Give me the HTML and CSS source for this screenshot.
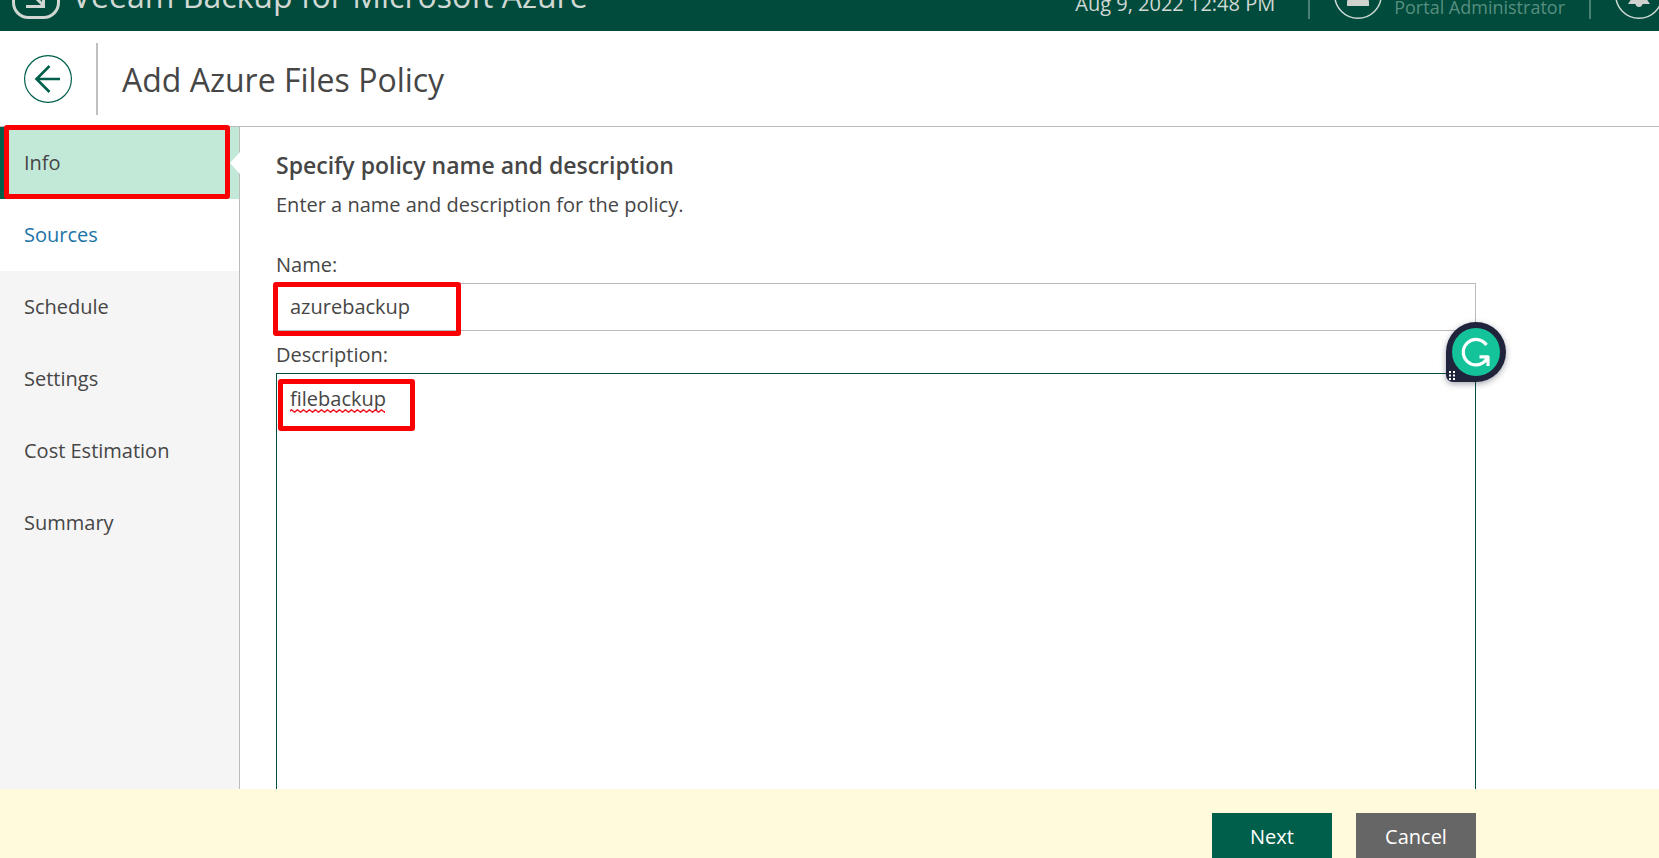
FILE: index.html
```html
<!DOCTYPE html>
<html lang="en">
<head>
<meta charset="utf-8">
<title>Add Azure Files Policy</title>
<link rel="stylesheet" href="styles.css">
</head>
<body>
<div class="app">
  <header class="topbar">
    <div class="topbar-inner">
      <svg class="logo" viewBox="0 0 48 48" aria-hidden="true">
        <rect x="1.5" y="1.5" width="45" height="45" rx="15" fill="none" stroke="#d0d6d2" stroke-width="3"/>
        <path d="M15 18L31 34M14 35.500H31.500V17" fill="none" stroke="#d0d6d2" stroke-width="3"/>
      </svg>
      <span class="product">Veeam Backup for Microsoft Azure</span>
      <span class="server-time">Aug 9, 2022 12:48 PM</span>
      <span class="rule"></span>
      <svg class="round-icon" viewBox="0 0 48 48" aria-hidden="true">
        <circle cx="24" cy="24" r="23.250" fill="none" stroke="#cfdad5" stroke-width="1.500"/>
        <circle cx="24" cy="17" r="6" fill="#d0d2d0"/>
        <path d="M13 35v-4c0-4 4-6 11-6s11 2 11 6v4z" fill="#d0d2d0"/>
      </svg>
      <span class="user-role">Portal Administrator</span>
      <span class="rule rule-after-user"></span>
      <button class="bell" type="button" aria-label="Notifications">
        <svg class="round-icon" viewBox="0 0 48 48" aria-hidden="true">
          <circle cx="24" cy="24" r="23.250" fill="none" stroke="#cfdad5" stroke-width="1.500"/>
          <path d="M24 12c-5 0-7 4-7 9v6l-4 6h22l-4-6v-6c0-5-2-9-7-9zM20.500 33h7c-.3 4-6.700 4-7 0z" fill="#d0d2d0"/>
        </svg>
      </button>
    </div>
  </header>

  <div class="titlebar">
    <button class="back" type="button" aria-label="Back">
      <svg class="round-icon" viewBox="0 0 48 48" aria-hidden="true">
        <circle cx="24" cy="24" r="23.400" fill="none" stroke="#005f4b" stroke-width="1.200"/>
        <path d="M36 24H12M25.500 11L12.500 24L25.500 37" fill="none" stroke="#005f4b" stroke-width="2.600"/>
      </svg>
    </button>
    <h1 class="title">Add Azure Files Policy</h1>
  </div>

  <div class="body">
    <nav class="steps">
      <a class="step current" href="#info">Info<span class="mark mark-step"></span></a>
      <a class="step next-step" href="#sources">Sources</a>
      <a class="step" href="#schedule">Schedule</a>
      <a class="step" href="#settings">Settings</a>
      <a class="step" href="#cost">Cost Estimation</a>
      <a class="step" href="#summary">Summary</a>
    </nav>

    <main class="content">
      <form class="form" id="policy">
        <h2 class="heading">Specify policy name and description</h2>
        <p class="lead">Enter a name and description for the policy.</p>
        <label class="label" for="name">Name:</label>
        <div class="field">
          <input class="input" id="name" type="text" value="azurebackup" spellcheck="false">
          <span class="mark mark-name"></span>
        </div>
        <label class="label" for="description">Description:</label>
        <div class="field field-grow">
          <textarea class="textarea" id="description" spellcheck="false">filebackup</textarea>
          <svg class="squiggle" viewBox="0 0 95 4" aria-hidden="true">
            <defs><pattern id="wave" width="6" height="4" patternUnits="userSpaceOnUse"><path d="M-1.500 3.200L1.500 .8L4.500 3.200L7.500 .8" fill="none" stroke="#f0141e" stroke-width="1.400"/></pattern></defs>
            <rect width="95" height="4" fill="url(#wave)"/>
          </svg>
          <span class="mark mark-description"></span>
          <svg class="assistant" viewBox="0 0 60 60" aria-hidden="true">
            <path d="M30 0a30 30 0 0 1 0 60H7a7 7 0 0 1-7-7V30A30 30 0 0 1 30 0z" fill="#1f243c"/>
            <circle cx="30" cy="30" r="24" fill="#15c39a"/>
            <path d="M40.500 23A12.700 12.700 0 1 0 40 38L42 35.500M33.500 34.800H42V44" fill="none" stroke="#fff" stroke-width="3.200" stroke-linejoin="round"/>
            <path d="M3 49h2v2H3zM7 49h2v2H7zM3 52.500h2v2H3zM7 52.500h2v2H7zM3 56h2v2H3zM7 56h2v2H7z" fill="#fff"/>
          </svg>
        </div>
      </form>
    </main>
  </div>

  <footer class="footer">
    <div class="actions">
      <button class="button primary" type="submit" form="policy">Next</button>
      <button class="button" type="button">Cancel</button>
    </div>
  </footer>
</div>
</body>
</html>
```
FILE: styles.css
```css
* { box-sizing: border-box; }

body {
  margin: 0;
  font-family: "Open Sans", "Noto Sans", sans-serif;
  font-size: 20px;
  line-height: 28px;
  color: #464646;
  background: #fff;
}

button, input, textarea { font: inherit; color: inherit; }

.app {
  height: 100vh;
  display: flex;
  flex-direction: column;
  overflow: hidden;
}

/* The top bar is scrolled most of the way out of view. */
.topbar {
  flex: none;
  height: 31px;
  display: flex;
  align-items: flex-end;
  overflow: hidden;
  background: #004b3b;
  color: #d0d8d4;
}

.topbar-inner {
  flex: 1;
  min-width: 0;
  height: 72px;
  display: flex;
  align-items: center;
  padding-left: 12px;
  white-space: nowrap;
}

.logo, .round-icon {
  flex: none;
  display: block;
  width: 48px;
  height: 48px;
}

.product {
  margin-left: 12px;
  padding-top: 2px;
  font-size: 32px;
  line-height: 40px;
}

.server-time {
  margin-left: auto;
  padding-top: 18px;
}

.user-role {
  margin-left: 12px;
  padding-top: 24px;
  font-size: 18px;
  color: #588e80;
}

.topbar .rule {
  flex: none;
  width: 2px;
  height: 48px;
  margin: 0 24px 0 33px;
  background: #4b8073;
}

.topbar .rule-after-user { margin-left: 24px; }

.bell, .back {
  flex: none;
  padding: 0;
  border: 0;
  background: none;
}

.bell { margin-right: -4px; }

.titlebar {
  flex: none;
  display: flex;
  align-items: center;
  padding: 12px 24px 11px;
  border-bottom: 1px solid #bbb;
}

.title {
  margin: 0 0 0 24px;
  padding: 2px 0 0 24px;
  border-left: 2px solid #bfbfbf;
  font-size: 32px;
  line-height: 70px;
  font-weight: 400;
}

.body {
  flex: 1;
  min-height: 0;
  display: flex;
}

.steps {
  flex: none;
  width: 240px;
  background: #f5f5f5;
  border-right: 1px solid #bbb;
}

.step {
  position: relative;
  display: block;
  padding: 22px 24px;
  color: inherit;
  text-decoration: none;
}

.current {
  background: #c2e8d8;
  box-shadow: inset 6px 0 #005f4b;
}

.current::after {
  content: "";
  position: absolute;
  top: 25px;
  right: -1px;
  border: solid transparent;
  border-width: 11px 10px 11px 0;
  border-right-color: #fff;
}

.next-step { background: #fff; color: #1b74a8; }

.mark {
  position: absolute;
  border: 5px solid #fb0000;
  border-radius: 3px;
  pointer-events: none;
}

.mark-step { z-index: 1; left: 4px; top: -2px; width: 226px; height: 74px; }
.mark-name { left: -3px; top: -1px; width: 188px; height: 54px; }
.mark-description { left: 2px; top: 6px; width: 137px; height: 52px; }

.content {
  flex: 1;
  min-width: 0;
  display: flex;
  padding: 24px 36px 0;
}

.form {
  flex: 1;
  max-width: 1200px;
  display: flex;
  flex-direction: column;
}

.heading {
  margin: 0 0 12px;
  font-size: 23px;
  line-height: 28px;
  font-weight: 600;
}

.lead { margin: 0 0 32px; }

.label { margin-bottom: 4px; }

.field { position: relative; margin-bottom: 10px; }

.field-grow { flex: 1; margin: 0; display: flex; }

.input, .textarea {
  display: block;
  width: 100%;
  padding: 0 13px;
  border: 1px solid #bbb;
  border-radius: 0;
  background: #fff;
  outline: 0;
}

.input { height: 48px; padding-bottom: 2px; }

.textarea {
  padding-top: 11px;
  border-color: #004f40;
  border-bottom: 0;
  resize: none;
}

.squiggle { position: absolute; left: 14px; top: 36px; width: 95px; height: 4px; }

.assistant {
  position: absolute;
  top: -51px;
  right: -30px;
  width: 60px;
  height: 60px;
  filter: drop-shadow(0 2px 3px rgba(31, 36, 60, .4));
}

.footer {
  flex: none;
  height: 69px;
  padding: 24px 36px 0 276px;
  background: #fffadb;
  overflow: hidden;
}

.actions {
  max-width: 1200px;
  display: flex;
  justify-content: flex-end;
  gap: 24px;
}

.button {
  width: 120px;
  height: 48px;
  padding: 0;
  border: 0;
  background: #666;
  color: #fff;
}

.primary { background: #005f4b; }
```
